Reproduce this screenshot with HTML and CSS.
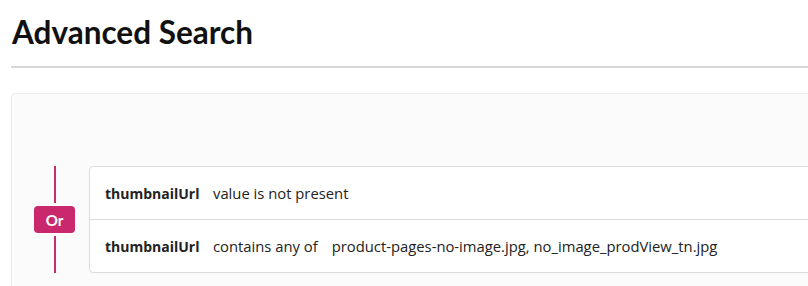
FILE: index.html
```html
<!DOCTYPE html>
<html lang="en">
<head>
  <meta charset="UTF-8">
  <meta name="viewport" content="width=device-width, initial-scale=1.0">
  <title>Advanced Search</title>
  <link rel="stylesheet" href="styles.css">
</head>
<body>
  <div class="page">
    <h1 class="page-title">Advanced Search</h1>
    <div class="query-panel">
      <div class="rule-group">
        <div class="group-operator">
          <span class="operator-line"></span>
          <span class="operator-badge">Or</span>
          <span class="operator-line"></span>
        </div>
        <div class="rule-list">
          <div class="rule">
            <span class="rule-field">thumbnailUrl</span>
            <span class="rule-op">value is not present</span>
          </div>
          <div class="rule">
            <span class="rule-field">thumbnailUrl</span>
            <span class="rule-op">contains any of</span>
            <span class="rule-value">product-pages-no-image.jpg, no_image_prodView_tn.jpg</span>
          </div>
        </div>
      </div>
    </div>
  </div>
</body>
</html>
```

FILE: styles.css
```css
body {
  margin: 0;
  background: #fff;
  color: #222;
  font-family: Lato, "Noto Sans", sans-serif;
  overflow: hidden;
}

.page {
  width: 1100px;
  padding: 0 11px;
}

.page-title {
  margin: 0;
  padding: 13px 1px 0;
  height: 53px;
  font-size: 31.5px;
  font-weight: 700;
  color: #111;
  border-bottom: 2px solid #d6d6d6;
}

/** Query panel **/

.query-panel {
  margin-top: 25px;
  padding: 72px 0 30px 22px;
  background: #fbfbfb;
  border: 1px solid #ececec;
  border-radius: 4px;
}

.rule-group {
  display: flex;
  gap: 14px;
}

.group-operator {
  width: 41px;
  display: flex;
  flex-direction: column;
  align-items: center;
  gap: 3px;
}

.operator-line {
  flex: 1;
  width: 2px;
  background: #c0306f;
}

.operator-badge {
  height: 27px;
  width: 41px;
  display: flex;
  align-items: center;
  justify-content: center;
  background: #c9296c;
  color: #fff;
  font-weight: 700;
  font-size: 15px;
  border-radius: 4px;
}

.rule-list {
  flex: 1;
  background: #fff;
  border: 1px solid #dcdcdc;
  border-radius: 4px;
}

.rule {
  height: 52px;
  display: flex;
  align-items: center;
  padding-left: 15px;
  font-family: "Open Sans", sans-serif;
  font-size: 14.8px;
  color: #222;
}

.rule + .rule {
  border-top: 1px solid #dcdcdc;
}

.rule-field {
  font-size: 14px;
  font-weight: 700;
  width: 108px;
}

.rule-op {
  margin-right: 14px;
}
```
